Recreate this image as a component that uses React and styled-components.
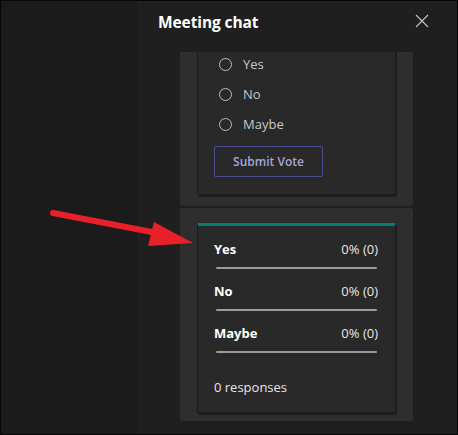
import styled, { createGlobalStyle } from 'styled-components'

const GlobalStyle = createGlobalStyle`
	html, body {
		margin: 0;
		padding: 0;
		background: #000;
	}
	body {
		font-family: 'Open Sans', 'Noto Sans', sans-serif;
	}
`

const options = ['Yes', 'No', 'Maybe']

const results = [
	{ label: 'Yes', value: '0% (0)' },
	{ label: 'No', value: '0% (0)' },
	{ label: 'Maybe', value: '0% (0)' },
]

function CloseIcon() {
	return (
		<svg width="14" height="14" viewBox="0 0 14 14">
			<path d="M1 1L13 13M13 1L1 13" stroke="#c4c4c4" strokeWidth="1.1" fill="none" />
		</svg>
	)
}

function Arrow() {
	return (
		<ArrowSvg width="200" height="60" viewBox="0 0 200 60">
			<line x1="52" y1="13" x2="156" y2="33" stroke="#e8202a" strokeWidth="6" strokeLinecap="round" />
			<polygon points="153,22 192,43 147,46" fill="#e8202a" />
		</ArrowSvg>
	)
}

export default function App() {
	return (
		<>
			<GlobalStyle />
			<Frame>
				<Backdrop />
				<Panel>
					<Header>
						<Title>Meeting chat</Title>
						<CloseButton>
							<CloseIcon />
						</CloseButton>
					</Header>
					<Viewport>
						{/* poll card, scrolled so its top sits above the viewport */}
						<OuterCard>
							<InnerCard scrolled>
								<OptionList>
									{options.map((o) => (
										<Option key={o}>
											<Radio />
											<span>{o}</span>
										</Option>
									))}
								</OptionList>
								<SubmitButton>Submit Vote</SubmitButton>
							</InnerCard>
						</OuterCard>
						<OuterCard last>
							<InnerCard accent>
								{results.map((r) => (
									<ResultRow key={r.label}>
										<ResultHead>
											<strong>{r.label}</strong>
											<span>{r.value}</span>
										</ResultHead>
										<Bar />
									</ResultRow>
								))}
								<Responses>0 responses</Responses>
							</InnerCard>
						</OuterCard>
					</Viewport>
				</Panel>
				<Arrow />
			</Frame>
		</>
	)
}

const Frame = styled.div`
	position: relative;
	display: flex;
	width: 456px;
	height: 433px;
	border: 1px solid #050505;
	overflow: hidden;
`

const Backdrop = styled.div`
	width: 136px;
	background: #1b1b1b;
`

const Panel = styled.div`
	flex: 1;
	display: flex;
	flex-direction: column;
	background: #1f1f1f;
`

const Header = styled.div`
	height: 51px;
	display: flex;
	align-items: flex-start;
	justify-content: space-between;
	padding: 0 28px 0 21px;
	box-sizing: border-box;
`

const Title = styled.h1`
	margin: 10px 0 0;
	font-size: 15.5px;
	font-weight: 700;
	color: #ffffff;
	letter-spacing: -0.1px;
`

const CloseButton = styled.div`
	margin-top: 13px;
	display: flex;
`

const Viewport = styled.div`
	flex: 1;
	display: flex;
	flex-direction: column;
	justify-content: flex-end;
	overflow: hidden;
	padding: 0 44px 13px 43px;
`

const OuterCard = styled.div`
	flex-shrink: 0;
	background: #2e2e2e;
	border-radius: 3px;
	padding: ${({ last }) => (last ? '15px 17px 8px' : '15px 17px 11px')};
	margin-bottom: ${({ last }) => (last ? '0' : '2px')};
`

const InnerCard = styled.div`
	background: #292929;
	border: 1px solid #1a1a1a;
	border-top: ${({ accent }) => (accent ? '3px solid #03806e' : '1px solid #1a1a1a')};
	border-radius: 2px;
	box-shadow: 1px 2px 1px rgba(0, 0, 0, 0.35);
	padding: ${({ accent, scrolled }) =>
		accent ? '13px 17px 15px 16px' : scrolled ? '60px 17px 17px 16px' : '14px 17px 17px 16px'};
`

const OptionList = styled.div`
	display: flex;
	flex-direction: column;
	gap: 10px;
	padding-left: 5px;
	margin-bottom: 12px;
`

const Option = styled.label`
	display: flex;
	align-items: center;
	gap: 11px;
	height: 20px;
	font-size: 13px;
	color: #c8c8c8;
`

const Radio = styled.span`
	width: 11px;
	height: 11px;
	border: 1px solid #bdbdbd;
	border-radius: 50%;
`

const SubmitButton = styled.button`
	display: block;
	width: 109px;
	height: 31px;
	background: transparent;
	border: 1px solid #4b4d92;
	border-radius: 2px;
	color: #a4a6dc;
	font-family: inherit;
	font-size: 12px;
	font-weight: 600;
	padding: 0;
`

const ResultRow = styled.div`
	margin-bottom: 12px;
`

const ResultHead = styled.div`
	display: flex;
	justify-content: space-between;
	align-items: center;
	height: 20px;
	font-size: 13px;
	color: #ffffff;

	strong {
		font-weight: 700;
	}
	span {
		color: #e6e6e6;
	}
`

const Bar = styled.div`
	height: 2px;
	margin: 8px 1px 0 2px;
	background: #9c9c9c;
	border-radius: 1px;
`

const Responses = styled.div`
	margin-top: 24px;
	height: 20px;
	line-height: 20px;
	font-size: 13px;
	color: #e6e6e6;
`

const ArrowSvg = styled.svg`
	position: absolute;
	left: 0;
	top: 199px;
	pointer-events: none;
`
